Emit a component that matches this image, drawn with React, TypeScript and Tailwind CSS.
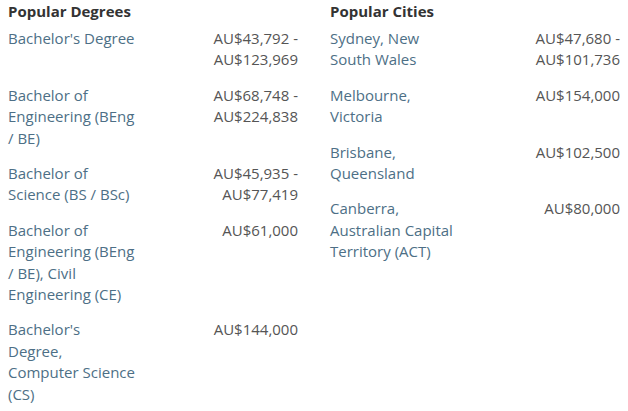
const DEGREES = [
  { name: "Bachelor's Degree", price: ["AU$43,792 -", "AU$123,969"] },
  { name: "Bachelor of Engineering (BEng / BE)", price: ["AU$68,748 -", "AU$224,838"] },
  { name: "Bachelor of Science (BS / BSc)", price: ["AU$45,935 -", "AU$77,419"] },
  { name: "Bachelor of Engineering (BEng / BE), Civil Engineering (CE)", price: ["AU$61,000"] },
  { name: "Bachelor's Degree, Computer Science (CS)", price: ["AU$144,000"] },
];

const CITIES = [
  { name: "Sydney, New South Wales", price: ["AU$47,680 -", "AU$101,736"] },
  { name: "Melbourne, Victoria", price: ["AU$154,000"] },
  { name: "Brisbane, Queensland", price: ["AU$102,500"] },
  { name: "Canberra, Australian Capital Territory (ACT)", price: ["AU$80,000"] },
];

type Row = { name: string; price: string[] };

function SalaryList({ title, rows }: { title: string; rows: Row[] }) {
  return (
    <div className="w-[290px]">
      <h3 className="text-[15px] leading-[21px] font-bold text-[#333] mb-[6px]">{title}</h3>
      <ul>
        {rows.map((r) => (
          <li key={r.name} className="flex justify-between mb-[14px]">
            <a className="w-[128px] text-[#4d6f86]">{r.name}</a>
            <div className="w-[100px] text-right text-[#555]">
              {r.price.map((p) => (
                <div key={p}>{p}</div>
              ))}
            </div>
          </li>
        ))}
      </ul>
    </div>
  );
}

export default function App() {
  return (
    <div
      className="min-h-screen bg-white flex gap-[32px] pl-[8px] pt-[1px] text-[15px] leading-[21.4px]"
      style={{ fontFamily: '"Open Sans", sans-serif' }}
    >
      <SalaryList title="Popular Degrees" rows={DEGREES} />
      <SalaryList title="Popular Cities" rows={CITIES} />
    </div>
  );
}
